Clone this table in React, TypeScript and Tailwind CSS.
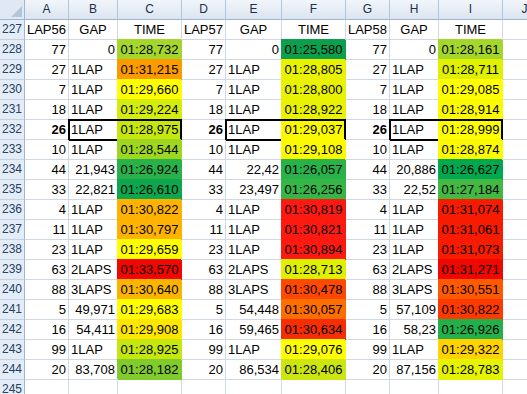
import React from "react";

const GRID =
  "grid grid-cols-[25px_44px_49px_64px_44px_56px_64px_44px_49px_64px_44px] h-[20px]";

const GL = "border-[#d0d7e5]";

// fill palette (full class strings)
const F: Record<string, string> = {
  a5d62b: "bg-[#a5d62b] border-[#a5d62b] shadow-[-1px_-1px_0_0_#a5d62b]",
  fc9a00: "bg-[#fc9a00] border-[#fc9a00] shadow-[-1px_-1px_0_0_#fc9a00]",
  ffff00: "bg-[#ffff00] border-[#ffff00] shadow-[-1px_-1px_0_0_#ffff00]",
  d4ed0e: "bg-[#d4ed0e] border-[#d4ed0e] shadow-[-1px_-1px_0_0_#d4ed0e]",
  c5e60f: "bg-[#c5e60f] border-[#c5e60f] shadow-[-1px_-1px_0_0_#c5e60f]",
  "9fd61f": "bg-[#9fd61f] border-[#9fd61f] shadow-[-1px_-1px_0_0_#9fd61f]",
  "29b24a": "bg-[#29b24a] border-[#29b24a] shadow-[-1px_-1px_0_0_#29b24a]",
  "0ea74f": "bg-[#0ea74f] border-[#0ea74f] shadow-[-1px_-1px_0_0_#0ea74f]",
  ffb300: "bg-[#ffb300] border-[#ffb300] shadow-[-1px_-1px_0_0_#ffb300]",
  f00800: "bg-[#f00800] border-[#f00800] shadow-[-1px_-1px_0_0_#f00800]",
  fbb400: "bg-[#fbb400] border-[#fbb400] shadow-[-1px_-1px_0_0_#fbb400]",
  ffe600: "bg-[#ffe600] border-[#ffe600] shadow-[-1px_-1px_0_0_#ffe600]",
  "82cb2c": "bg-[#82cb2c] border-[#82cb2c] shadow-[-1px_-1px_0_0_#82cb2c]",
  "0c9f4e": "bg-[#0c9f4e] border-[#0c9f4e] shadow-[-1px_-1px_0_0_#0c9f4e]",
  e9f200: "bg-[#e9f200] border-[#e9f200] shadow-[-1px_-1px_0_0_#e9f200]",
  fbfa00: "bg-[#fbfa00] border-[#fbfa00] shadow-[-1px_-1px_0_0_#fbfa00]",
  "35b647": "bg-[#35b647] border-[#35b647] shadow-[-1px_-1px_0_0_#35b647]",
  fe1a10: "bg-[#fe1a10] border-[#fe1a10] shadow-[-1px_-1px_0_0_#fe1a10]",
  dff000: "bg-[#dff000] border-[#dff000] shadow-[-1px_-1px_0_0_#dff000]",
  ff4800: "bg-[#ff4800] border-[#ff4800] shadow-[-1px_-1px_0_0_#ff4800]",
  ff6f00: "bg-[#ff6f00] border-[#ff6f00] shadow-[-1px_-1px_0_0_#ff6f00]",
  f72e04: "bg-[#f72e04] border-[#f72e04] shadow-[-1px_-1px_0_0_#f72e04]",
  cbe611: "bg-[#cbe611] border-[#cbe611] shadow-[-1px_-1px_0_0_#cbe611]",
  "00a84f": "bg-[#00a84f] border-[#00a84f] shadow-[-1px_-1px_0_0_#00a84f]",
  "43b843": "bg-[#43b843] border-[#43b843] shadow-[-1px_-1px_0_0_#43b843]",
  f71b00: "bg-[#f71b00] border-[#f71b00] shadow-[-1px_-1px_0_0_#f71b00]",
  ff5a00: "bg-[#ff5a00] border-[#ff5a00] shadow-[-1px_-1px_0_0_#ff5a00]",
  ff3a00: "bg-[#ff3a00] border-[#ff3a00] shadow-[-1px_-1px_0_0_#ff3a00]",
  "22b04a": "bg-[#22b04a] border-[#22b04a] shadow-[-1px_-1px_0_0_#22b04a]",
  ffd200: "bg-[#ffd200] border-[#ffd200] shadow-[-1px_-1px_0_0_#ffd200]",
  e6f300: "bg-[#e6f300] border-[#e6f300] shadow-[-1px_-1px_0_0_#e6f300]",
};

type Group = [string, string, string, string];
type Row = { n: number; bold?: boolean; g: Group[] };

const rows: Row[] = [
  { n: 228, g: [["77", "0", "01:28,732", "a5d62b"], ["77", "0", "01:25,580", "0c9f4e"], ["77", "0", "01:28,161", "a5d62b"]] },
  { n: 229, g: [["27", "1LAP", "01:31,215", "fc9a00"], ["27", "1LAP", "01:28,805", "e9f200"], ["27", "1LAP", "01:28,711", "dff000"]] },
  { n: 230, g: [["7", "1LAP", "01:29,660", "ffff00"], ["7", "1LAP", "01:28,800", "e9f200"], ["7", "1LAP", "01:29,085", "ffff00"]] },
  { n: 231, g: [["18", "1LAP", "01:29,224", "d4ed0e"], ["18", "1LAP", "01:28,922", "e9f200"], ["18", "1LAP", "01:28,914", "fbfa00"]] },
  { n: 232, bold: true, g: [["26", "1LAP", "01:28,975", "c5e60f"], ["26", "1LAP", "01:29,037", "fbfa00"], ["26", "1LAP", "01:28,999", "ffff00"]] },
  { n: 233, g: [["10", "1LAP", "01:28,544", "9fd61f"], ["10", "1LAP", "01:29,108", "fbfa00"], ["10", "1LAP", "01:28,874", "fbfa00"]] },
  { n: 234, g: [["44", "21,943", "01:26,924", "29b24a"], ["44", "22,42", "01:26,057", "29b24a"], ["44", "20,886", "01:26,627", "00a84f"]] },
  { n: 235, g: [["33", "22,821", "01:26,610", "0ea74f"], ["33", "23,497", "01:26,256", "35b647"], ["33", "22,52", "01:27,184", "43b843"]] },
  { n: 236, g: [["4", "1LAP", "01:30,822", "ffb300"], ["4", "1LAP", "01:30,819", "fe1a10"], ["4", "1LAP", "01:31,074", "f71b00"]] },
  { n: 237, g: [["11", "1LAP", "01:30,797", "ffb300"], ["11", "1LAP", "01:30,821", "fe1a10"], ["11", "1LAP", "01:31,061", "f71b00"]] },
  { n: 238, g: [["23", "1LAP", "01:29,659", "ffff00"], ["23", "1LAP", "01:30,894", "fe1a10"], ["23", "1LAP", "01:31,073", "f71b00"]] },
  { n: 239, g: [["63", "2LAPS", "01:33,570", "f00800"], ["63", "2LAPS", "01:28,713", "dff000"], ["63", "2LAPS", "01:31,271", "f00800"]] },
  { n: 240, g: [["88", "3LAPS", "01:30,640", "fbb400"], ["88", "3LAPS", "01:30,478", "ff4800"], ["88", "3LAPS", "01:30,551", "ff5a00"]] },
  { n: 241, g: [["5", "49,971", "01:29,683", "ffff00"], ["5", "54,448", "01:30,057", "ff6f00"], ["5", "57,109", "01:30,822", "ff3a00"]] },
  { n: 242, g: [["16", "54,411", "01:29,908", "ffe600"], ["16", "59,465", "01:30,634", "f72e04"], ["16", "58,23", "01:26,926", "22b04a"]] },
  { n: 243, g: [["99", "1LAP", "01:28,925", "c5e60f"], ["99", "1LAP", "01:29,076", "ffff00"], ["99", "1LAP", "01:29,322", "ffd200"]] },
  { n: 244, g: [["20", "83,708", "01:28,182", "82cb2c"], ["20", "86,534", "01:28,406", "cbe611"], ["20", "87,156", "01:28,783", "e6f300"]] },
];

const cellBase = "border-r border-b whitespace-nowrap overflow-visible text-[13px] leading-[19px] text-black";
const rowHead =
  "border-r border-b border-r-[#9eb6ce] border-b-[#c3d1e2] bg-[#e4ecf7] text-center text-[12px] leading-[19px] text-[#27415f]";
const colHead =
  "border-r border-b border-r-[#b3c5da] border-b-[#9eb6ce] bg-linear-to-b from-[#f2f6fb] to-[#dae4f0] text-center text-[12px] leading-[19px] text-[#1f2f45]";

function RowHead({ n }: { n: number }) {
  return <div className={rowHead}>{n}</div>;
}

function Blank() {
  return <div className={`${cellBase} ${GL}`} />;
}

export default function App() {
  return (
    <div className="w-[527px] h-[394px] overflow-hidden bg-white font-['Liberation_Sans',Arial,sans-serif]">
      <div className="w-[547px]">
        {/* column letters */}
        <div className={GRID}>
          <div className="flex items-end justify-end pr-[2px] pb-[2px] border-r border-b border-[#9eb6ce] bg-[#dfe8f3]">
            <svg width="11" height="11" viewBox="0 0 11 11">
              <polygon points="11,0 11,11 0,11" fill="#b4c6dc" />
            </svg>
          </div>
          {["A", "B", "C", "D", "E", "F", "G", "H", "I", "J"].map((l) => (
            <div key={l} className={colHead}>
              {l}
            </div>
          ))}
        </div>

        {/* row 227 titles */}
        <div className={GRID}>
          <RowHead n={227} />
          {["LAP56", "GAP", "TIME", "LAP57", "GAP", "TIME", "LAP58", "GAP", "TIME"].map((t, i) => (
            <div key={i} className={`${cellBase} ${GL} text-center`}>
              {t}
            </div>
          ))}
          <Blank />
        </div>

        {rows.map((r) => (
          <div key={r.n} className={`${GRID} relative`}>
            <RowHead n={r.n} />
            {r.g.map(([lap, gap, time, col], i) => {
              const numeric = /^[\d,]+$/.test(gap);
              return (
                <React.Fragment key={i}>
                  <div className={`${cellBase} ${GL} text-right pr-[2px] ${r.bold ? "font-bold" : ""}`}>{lap}</div>
                  <div className={`${cellBase} ${GL} ${numeric ? "text-right pr-[2px]" : "text-left pl-[2px]"}`}>{gap}</div>
                  <div className={`${cellBase} ${F[col]} text-center`}>{time}</div>
                </React.Fragment>
              );
            })}
            <Blank />
            {r.bold && (
              <>
                <div className="absolute left-[68px] top-[-1px] w-[114px] h-[22px] border-2 border-black pointer-events-none" />
                <div className="absolute left-[225px] top-[-1px] w-[121px] h-[22px] border-2 border-black pointer-events-none" />
                <div className="absolute left-[389px] top-[-1px] w-[114px] h-[22px] border-2 border-black pointer-events-none" />
              </>
            )}
          </div>
        ))}

        {/* row 245 */}
        <div className={GRID}>
          <RowHead n={245} />
          {Array.from({ length: 10 }).map((_, i) => (
            <Blank key={i} />
          ))}
        </div>
      </div>
    </div>
  );
}
